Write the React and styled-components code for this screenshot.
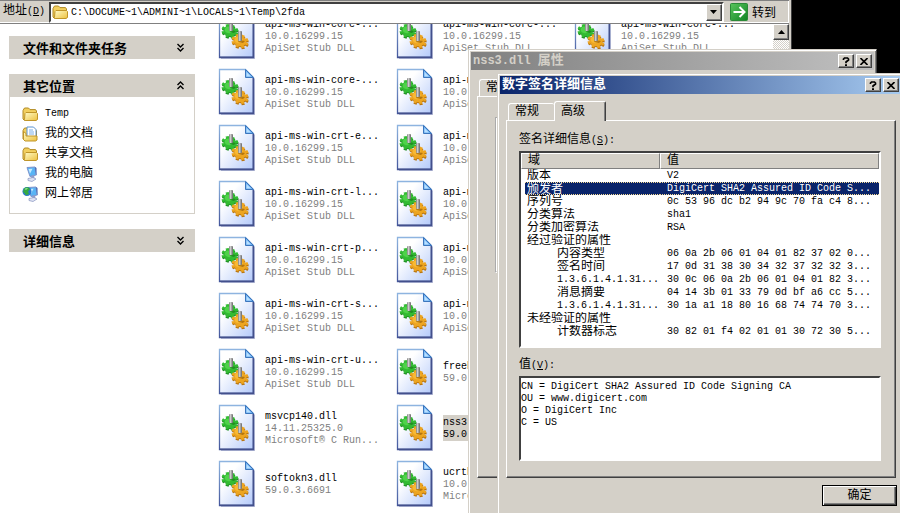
import React, { useId } from "react";
import styled, { createGlobalStyle, css } from "styled-components";

const face = "#d4d0c8";
const shade = "#808080";
const dark = "#404040";

const GlobalStyle = createGlobalStyle`
  * { box-sizing: border-box; }
  html, body { margin: 0; height: 100%; overflow: hidden; background: #000; }
  body, button, input, textarea, table {
    font-family: "Liberation Mono", "Noto Sans CJK SC", monospace;
    font-size: 10px;
    line-height: 12px;
    color: #000;
  }
`;

const raised = css`
  background: ${face};
  border: 1px solid;
  border-color: #fff ${dark} ${dark} #fff;
  box-shadow: inset -1px -1px 0 ${shade};
`;

const sunken = css`
  background: #fff;
  border: 2px solid;
  border-color: ${dark} #fff #fff ${dark};
`;

/* Han characters are drawn two half-width cells wide */
const Han = styled.span`
  font-family: "Noto Sans CJK SC", sans-serif;
  font-size: ${(p) => (p.$bold ? 13 : 12)}px;
  line-height: 10px;
`;

const Mixed = ({ children, bold }) =>
  children
    .split(/([\u4e00-\u9fff]+)/)
    .filter(Boolean)
    .map((run, i) =>
      /[\u4e00-\u9fff]/.test(run) ? (
        <Han key={i} $bold={bold}>{run}</Han>
      ) : (
        <React.Fragment key={i}>{run}</React.Fragment>
      )
    );

const Desktop = styled.main`
  position: relative;
  height: 100vh;
  overflow: hidden;
  background: #000;
`;

/* ---------- Explorer ---------- */
const Explorer = styled.section`
  position: absolute;
  inset: 0 108px 0 0;
  display: flex;
  flex-direction: column;
  background: ${face};
  border-right: 1px solid ${dark};
  padding-right: 2px;
`;

const AddressBar = styled.form`
  display: flex;
  align-items: center;
  height: 24px;
  padding: 0 2px 0 3px;
  border-top: 1px solid ${shade};
  border-bottom: 1px solid ${shade};
  box-shadow: inset -1px -1px 0 #fff;
`;

const AddressLabel = styled.label`
  width: 46px;
  line-height: 16px;
  white-space: nowrap;
`;

const AddressCombo = styled.div`
  ${sunken}
  flex: 1;
  display: flex;
  align-items: center;
  height: 21px;
  svg { margin: 0 2px 0 1px; flex: none; }
`;

const AddressInput = styled.input`
  flex: 1;
  min-width: 0;
  border: 0;
  padding: 2px 1px 0;
  outline: 0;
  background: transparent;
`;

const SmallButton = styled.button`
  ${raised}
  display: flex;
  align-items: center;
  justify-content: center;
  flex: none;
  width: 16px;
  height: ${(p) => p.$height || 14}px;
  padding: 0;
`;

const GoButton = styled.button`
  display: flex;
  align-items: center;
  gap: 4px;
  width: 57px;
  margin-left: 6px;
  padding: 0;
  border: 0;
  background: none;
  white-space: nowrap;
`;

const ExplorerBody = styled.div`
  flex: 1;
  min-height: 0;
  display: flex;
  overflow: hidden;
  background: #fff;
`;

const Sidebar = styled.aside`
  flex: none;
  display: flex;
  flex-direction: column;
  gap: 15px;
  width: 204px;
  padding: 12px 9px;
`;

const TaskHeader = styled.button`
  display: flex;
  align-items: center;
  justify-content: space-between;
  width: 100%;
  height: 23px;
  padding: 0 10px 0 14px;
  border: 0;
  background: ${face};
  font-weight: 700;
`;

const PlaceList = styled.ul`
  display: flex;
  flex-direction: column;
  margin: 0;
  padding: 7px 12px 9px;
  border: 1px solid ${face};
  border-top: 0;
  list-style: none;
`;

const PlaceLink = styled.a`
  display: flex;
  align-items: center;
  gap: 7px;
  height: 20px;
  color: #000;
  text-decoration: none;
`;

const FilePane = styled.div`
  flex: 1;
  min-width: 0;
  overflow: hidden;
`;

const FileGrid = styled.ul`
  display: grid;
  grid-auto-flow: column;
  grid-template-rows: repeat(9, 56px);
  grid-auto-columns: 178px;
  margin: -16px 0 0;
  padding: 0 0 0 14px;
  list-style: none;
`;

const FileTile = styled.li`
  display: flex;
  align-items: center;
  gap: 9px;
`;

const FileText = styled.div`
  padding: 2px 0 0;
  white-space: nowrap;
  color: ${(p) => (p.$selected ? "#000" : shade)};
  background: ${(p) => (p.$selected ? face : "transparent")};
`;

const FileName = styled.div`
  color: #000;
`;

const ScrollTrack = styled.div`
  flex: none;
  width: 16px;
  background: repeating-conic-gradient(${face} 0 25%, #fff 0 50%) 0 0 / 2px 2px;
`;

/* ---------- Dialog windows ---------- */
const DialogFrame = styled.section`
  position: absolute;
  display: flex;
  flex-direction: column;
  padding: 1px;
  background: ${face};
  border: 1px solid;
  border-color: ${face} ${dark} ${dark} ${face};
  box-shadow: inset 1px 1px 0 #fff, inset -1px -1px 0 ${shade};
`;

const PropertiesWindow = styled(DialogFrame)`
  inset: 49px 23px -10px 468px;
`;

const SignatureWindow = styled(DialogFrame)`
  top: 73px;
  left: 497px;
  right: -4px;
`;

const TitleBar = styled.header`
  display: flex;
  align-items: center;
  gap: 2px;
  height: 18px;
  margin: 1px;
  padding: 0 2px;
  color: ${(p) => (p.$active ? "#fff" : face)};
  background: ${(p) =>
    p.$active
      ? "linear-gradient(90deg, #0a246a, #a6caf0)"
      : "linear-gradient(90deg, #808080, #c0c0c0)"};
`;

const Title = styled.h2`
  flex: 1;
  margin: 0;
  font-size: 12px;
  font-weight: 700;
  line-height: 16px;
`;

const TabArea = styled.div`
  display: flex;
  flex-direction: column;
  margin: 6px 6px 0 7px;
`;

const TabList = styled.div`
  display: flex;
  align-items: flex-end;
  height: 19px;
  padding-left: 2px;
`;

const Tab = styled.button`
  height: ${(p) => (p.$selected ? 20 : 17)}px;
  width: ${(p) => (p.$selected ? 52 : 46)}px;
  margin-bottom: ${(p) => (p.$selected ? -1 : 0)}px;
  padding: 0 0 0 6px;
  z-index: ${(p) => (p.$selected ? 1 : 0)};
  text-align: left;
  background: ${face};
  border: 1px solid #fff;
  border-bottom: 0;
  border-right: ${(p) => (p.$selected ? `1px solid ${dark}` : "0")};
  box-shadow: ${(p) => (p.$selected ? `inset -1px 0 0 ${shade}` : "none")};
  border-radius: 3px 2px 0 0;
`;

const TabPanel = styled.div`
  display: flex;
  flex-direction: column;
  padding: 12px 14px 16px 12px;
  border: 1px solid;
  border-color: #fff ${dark} ${dark} #fff;
  box-shadow: inset -1px -1px 0 ${shade};
`;

const PropertiesPanel = styled(TabPanel)`
  height: 382px;
  padding: 20px 17px;
`;

const GroupBox = styled.fieldset`
  height: 156px;
  margin: 0;
  padding: 0;
  border: 2px groove #fff;
`;

const FieldLabel = styled.label`
  display: block;
  height: 14px;
  line-height: 14px;
  margin-bottom: 4px;
`;

const ListView = styled.div`
  ${sunken}
  min-height: 197px;
  margin-bottom: 10px;
`;

const DetailTable = styled.table`
  width: 100%;
  table-layout: fixed;
  border-collapse: separate;
  border-spacing: 0;
`;

const HeadCell = styled.th`
  width: ${(p) => p.$width || "auto"};
  height: 16px;
  padding: 0 6px;
  background: ${face};
  border: 1px solid;
  border-color: #fff ${shade} ${shade} #fff;
  text-align: left;
  font-weight: 400;
  line-height: 12px;
`;

const Row = styled.tr`
  color: ${(p) => (p.$selected ? "#fff" : "#000")};
`;

const Cell = styled.td`
  height: 13px;
  padding: 0 0 0 ${(p) => (p.$first ? 4 : 0)}px;
`;

const CellText = styled.div`
  height: 13px;
  padding-left: ${(p) => (p.$value ? 7 : p.$indent ? 32 : 2)}px;
  overflow: hidden;
  white-space: nowrap;
  line-height: 13px;
  ${(p) =>
    p.$selected &&
    css`
      line-height: 11px;
      background: #0a246a;
      border: 0 dotted #f5db95;
      border-width: 1px 0;
    `}
`;

const ValueBox = styled.textarea`
  ${sunken}
  display: block;
  width: 100%;
  height: 85px;
  padding: 3px 0;
  resize: none;
  outline: 0;
`;

const ButtonRow = styled.footer`
  display: flex;
  justify-content: flex-end;
  padding: 7px 5px 8px;
`;

const OkButton = styled.button`
  width: 75px;
  height: 21px;
  padding: 0;
  background: ${face};
  border: 1px solid #000;
  box-shadow: inset 1px 1px 0 #fff, inset -1px -1px 0 ${dark}, inset -2px -2px 0 ${shade};
`;

/* ---------- Icons ---------- */
const FolderIcon = ({ doc }) => {
  const id = useId();
  return (
    <svg width="16" height="16" viewBox="0 0 16 16" aria-hidden="true">
      <defs>
        <linearGradient id={id} x1="0" y1="0" x2="1" y2="1">
          <stop offset="0" stopColor="#fffbc8" />
          <stop offset="1" stopColor="#edc13f" />
        </linearGradient>
      </defs>
      <path d="M1 4.5 2.5 2h4L8 3.6h5.500l1 1.400v8.500l-1.500 1H2.500L1 13z" fill="#f2cf5e" stroke="#b08a24" />
      {doc && (
        <g>
          <path d="M5 1h6.500L14 3.500V12H5z" fill="#fff" stroke="#5b93d2" />
          <path d="M7 4h4M7 6h5M7 8h5" stroke="#7aaee6" />
        </g>
      )}
      <path
        d={doc ? "M1.500 5.500 4 7.500V10h11v4l-1.500 1H3l-1.500-1.500z" : "M3 7.500 4 6.500h10.500l1 1v6l-1.500 1H3.500L2.500 13.500z"}
        fill={`url(#${id})`}
        stroke="#c09528"
      />
    </svg>
  );
};

const Monitor = () => (
  <g>
    <path d="m5 1.500 8-.5 1 8-6 1.500z" fill="#58b4f5" stroke="#7d93cc" />
    <path d="m6.500 3 4-.3-2.500 5z" fill="#c5ebff" />
    <path d="m13 1 1.500 1v7.500L14 9z" fill="#3e5fae" />
    <path d="m9 10 3-1 .5 3-3 .5z" fill="#8f9fcd" />
    <path d="m6 12.500 5-1 3 1.500-4 2.500-4-1z" fill="#dfe4f5" stroke="#8592bd" strokeWidth=".7" />
  </g>
);

const ComputerIcon = () => (
  <svg width="16" height="16" viewBox="0 0 16 16" aria-hidden="true">
    <Monitor />
  </svg>
);

const NetworkIcon = () => (
  <svg width="16" height="16" viewBox="0 0 16 16" aria-hidden="true">
    <g transform="translate(1 0)"><Monitor /></g>
    <circle cx="5" cy="5.500" r="4.500" fill="#2d77cf" />
    <path d="M2 2.500C4 .5 7 1 8 3L6 5.500 7 8 4 9.500 2.500 7 1 6z" fill="#35aa42" />
    <path d="M2.500 3c1-1.200 2.500-1.300 3.500-.8L4 4z" fill="#8de08c" />
  </svg>
);

const GoIcon = () => {
  const id = useId();
  return (
    <svg width="18" height="18" viewBox="0 0 18 18" aria-hidden="true">
      <defs>
        <linearGradient id={id} x1="0" y1="0" x2="1" y2="1">
          <stop offset="0" stopColor="#58c45c" />
          <stop offset="1" stopColor="#118524" />
        </linearGradient>
      </defs>
      <rect x=".5" y=".5" width="17" height="17" rx="1" fill={`url(#${id})`} stroke="#2b8a38" />
      <path d="M3.500 9h11M9.500 4l5 5-5 5" fill="none" stroke="#fff" strokeWidth="2" />
    </svg>
  );
};

const Gear = ({ x, y, light, main, edge }) => (
  <g transform={`translate(${x} ${y}) rotate(14) scale(1 .78)`}>
    <circle cx=".6" cy="1.500" r="6.900" fill="none" stroke={edge} strokeWidth="3.600" strokeDasharray="2.900 2.520" />
    <circle cx=".6" cy="1.500" r="6.200" fill={edge} />
    <circle r="6.900" fill="none" stroke={main} strokeWidth="3.600" strokeDasharray="2.900 2.520" />
    <circle r="6.600" fill={main} />
    <circle cx="-1.500" cy="-1" r="4" fill={light} />
  </g>
);

const DllIcon = () => {
  const id = useId();
  return (
    <svg width="38" height="48" viewBox="0 0 38 48" aria-hidden="true">
      <defs>
        <linearGradient id={id} x1="0" y1="0" x2="1" y2="1">
          <stop offset=".3" stopColor="#fff" />
          <stop offset="1" stopColor="#b3c9fa" />
        </linearGradient>
        <linearGradient id={`${id}e`} x1="0" y1="0" x2="0" y2="1">
          <stop offset="0" stopColor="#8eb4e0" />
          <stop offset="1" stopColor="#43569c" />
        </linearGradient>
        <linearGradient id={`${id}p`}>
          <stop offset="0" stopColor="#777" />
          <stop offset=".35" stopColor="#d0d0d0" />
          <stop offset="1" stopColor="#666" />
        </linearGradient>
      </defs>
      <path d="M3 3h26l8 8v36H3z" fill="#8b91ba" opacity=".6" />
      <path d="M1.500 1.500h26l8 8v36h-34z" fill={`url(#${id})`} stroke={`url(#${id}e)`} strokeWidth="1.300" />
      <path d="M35.300 10v35.300H2" fill="none" stroke="#43508c" strokeWidth="1.500" />
      <path d="M27.500 1.500v8h8z" fill="#69aef0" stroke="#3c76bd" />
      <path d="M28.500 4v4.500H33z" fill="#b9e0ff" />
      <Gear x={12} y={19} light="#4fd24a" main="#33bb33" edge="#1f8f24" />
      <Gear x={22} y={29} light="#f8b934" main="#eda521" edge="#b87510" />
      <path d="M13 18l5 1-2 2-4-1z" fill="#157018" opacity=".6" />
      <path d="M21 28l6 1-2 2-5-1z" fill="#8a5305" opacity=".6" />
      <rect x="11" y="10" width="4" height="9" rx="1" fill={`url(#${id}p)`} />
      <rect x="20" y="19" width="4" height="10" rx="1" fill={`url(#${id}p)`} />
    </svg>
  );
};

const Chevrons = ({ up }) => (
  <svg width="9" height="9" viewBox="0 0 9 9" aria-hidden="true">
    <path
      d={up ? "M1.500 4 4.500 1l3 3M1.500 8l3-3 3 3" : "M1.500 1l3 3 3-3M1.500 5l3 3 3-3"}
      fill="none"
      stroke="#000"
      strokeWidth="1.400"
    />
  </svg>
);

const Triangle = ({ up }) => (
  <svg width="7" height="4" viewBox="0 0 7 4" aria-hidden="true">
    <path d={up ? "M0 4 3.500 0 7 4z" : "M0 0h7L3.500 4z"} />
  </svg>
);

const HelpGlyph = () => (
  <svg width="8" height="9" viewBox="0 0 8 9" aria-hidden="true">
    <path d="M1.500 3V2l1-1h3l1 1v1L4 5v1.200" fill="none" stroke="#000" strokeWidth="1.700" />
    <path d="M3 7.300h2V9H3z" />
  </svg>
);

const CloseGlyph = () => (
  <svg width="8" height="7" viewBox="0 0 8 7" aria-hidden="true">
    <path d="M.5 0l7 7M7.500 0l-7 7" stroke="#000" strokeWidth="1.600" />
  </svg>
);

/* ---------- Data ---------- */
const stub = (name) => ({ name, lines: ["10.0.16299.15", "ApiSet Stub DLL"] });

const files = [
  stub("api-ms-win-core-..."),
  stub("api-ms-win-core-..."),
  stub("api-ms-win-crt-e..."),
  stub("api-ms-win-crt-l..."),
  stub("api-ms-win-crt-p..."),
  stub("api-ms-win-crt-s..."),
  stub("api-ms-win-crt-u..."),
  { name: "msvcp140.dll", lines: ["14.11.25325.0", "Microsoft® C Run..."] },
  { name: "softokn3.dll", lines: ["59.0.3.6691"] },
  stub("api-ms-win-core-..."),
  stub("api-ms-win-core-..."),
  stub("api-ms-win-crt-..."),
  stub("api-ms-win-crt-..."),
  stub("api-ms-win-crt-..."),
  stub("api-ms-win-crt-..."),
  { name: "freebl3.dll", lines: ["59.0.3.6691"] },
  { name: "nss3.dll", lines: ["59.0.3.6691"], selected: true },
  { name: "ucrtbase.dll", lines: ["10.0.16299.15", "Microsoft® C Run..."] },
  stub("api-ms-win-core-..."),
];

const places = [
  ["Temp", <FolderIcon />],
  ["我的文档", <FolderIcon doc />],
  ["共享文档", <FolderIcon />],
  ["我的电脑", <ComputerIcon />],
  ["网上邻居", <NetworkIcon />],
];

const details = [
  { field: "版本", value: "V2" },
  { field: "颁发者", value: "DigiCert SHA2 Assured ID Code S...", selected: true },
  { field: "序列号", value: "0c 53 96 dc b2 94 9c 70 fa c4 8..." },
  { field: "分类算法", value: "sha1" },
  { field: "分类加密算法", value: "RSA" },
  { field: "经过验证的属性", value: "" },
  { field: "内容类型", value: "06 0a 2b 06 01 04 01 82 37 02 0...", indent: true },
  { field: "签名时间", value: "17 0d 31 38 30 34 32 37 32 32 3...", indent: true },
  { field: "1.3.6.1.4.1.31...", value: "30 0c 06 0a 2b 06 01 04 01 82 3...", indent: true },
  { field: "消息摘要", value: "04 14 3b 01 33 79 0d bf a6 cc 5...", indent: true },
  { field: "1.3.6.1.4.1.31...", value: "30 1a a1 18 80 16 68 74 74 70 3...", indent: true },
  { field: "未经验证的属性", value: "" },
  { field: "计数器标志", value: "30 82 01 f4 02 01 01 30 72 30 5...", indent: true },
];

const issuer = `CN = DigiCert SHA2 Assured ID Code Signing CA
OU = www.digicert.com
O = DigiCert Inc
C = US`;

const WindowTitle = ({ active, children }) => (
  <TitleBar $active={active}>
    <Title><Mixed bold>{children}</Mixed></Title>
    <SmallButton type="button" aria-label="帮助"><HelpGlyph /></SmallButton>
    <SmallButton type="button" aria-label="关闭"><CloseGlyph /></SmallButton>
  </TitleBar>
);

const TaskTitle = ({ open, children }) => (
  <TaskHeader type="button" aria-expanded={!!open}>
    <Mixed bold>{children}</Mixed>
    <Chevrons up={open} />
  </TaskHeader>
);

export default function App() {
  return (
    <Desktop>
      <GlobalStyle />
      <Explorer>
        <AddressBar onSubmit={(e) => e.preventDefault()}>
          <AddressLabel htmlFor="address"><Mixed>地址</Mixed>(<u>D</u>)</AddressLabel>
          <AddressCombo>
            <FolderIcon />
            <AddressInput id="address" defaultValue="C:\DOCUME~1\ADMINI~1\LOCALS~1\Temp\2fda" />
            <SmallButton type="button" $height={17} aria-label="展开"><Triangle /></SmallButton>
          </AddressCombo>
          <GoButton type="submit"><GoIcon /><Han>转到</Han></GoButton>
        </AddressBar>
        <ExplorerBody>
          <Sidebar>
            <TaskTitle>文件和文件夹任务</TaskTitle>
            <div>
              <TaskTitle open>其它位置</TaskTitle>
              <PlaceList>
                {places.map(([name, icon]) => (
                  <li key={name}>
                    <PlaceLink href="#">{icon}<span><Mixed>{name}</Mixed></span></PlaceLink>
                  </li>
                ))}
              </PlaceList>
            </div>
            <TaskTitle>详细信息</TaskTitle>
          </Sidebar>
          <FilePane>
            <FileGrid>
              {files.map((file, i) => (
                <FileTile key={i}>
                  <DllIcon />
                  <FileText $selected={file.selected}>
                    <FileName>{file.name}</FileName>
                    {file.lines.map((line) => <div key={line}>{line}</div>)}
                  </FileText>
                </FileTile>
              ))}
            </FileGrid>
          </FilePane>
          <ScrollTrack>
            <SmallButton type="button" $height={16} aria-label="向上滚动"><Triangle up /></SmallButton>
          </ScrollTrack>
        </ExplorerBody>
      </Explorer>

      <PropertiesWindow>
        <WindowTitle>nss3.dll 属性</WindowTitle>
        <TabArea>
          <TabList role="tablist">
            <Tab type="button" role="tab"><Han>常规</Han></Tab>
          </TabList>
          <PropertiesPanel><GroupBox /></PropertiesPanel>
        </TabArea>
      </PropertiesWindow>

      <SignatureWindow role="dialog">
        <WindowTitle active>数字签名详细信息</WindowTitle>
        <TabArea>
          <TabList role="tablist">
            <Tab type="button" role="tab" aria-selected="false"><Han>常规</Han></Tab>
            <Tab type="button" role="tab" aria-selected="true" $selected><Han>高级</Han></Tab>
          </TabList>
          <TabPanel role="tabpanel">
            <FieldLabel as="div" id="details-label"><Mixed>签名详细信息</Mixed>(<u>S</u>):</FieldLabel>
            <ListView>
              <DetailTable aria-labelledby="details-label">
                <thead>
                  <tr>
                    <HeadCell $width="139px"><Han>域</Han></HeadCell>
                    <HeadCell><Han>值</Han></HeadCell>
                  </tr>
                </thead>
                <tbody>
                  {details.map((d, i) => (
                    <Row key={i} $selected={d.selected}>
                      <Cell $first>
                        <CellText $indent={d.indent} $selected={d.selected}><Mixed>{d.field}</Mixed></CellText>
                      </Cell>
                      <Cell>
                        <CellText $value $selected={d.selected}>{d.value}</CellText>
                      </Cell>
                    </Row>
                  ))}
                </tbody>
              </DetailTable>
            </ListView>
            <FieldLabel htmlFor="value"><Mixed>值</Mixed>(<u>V</u>):</FieldLabel>
            <ValueBox id="value" readOnly defaultValue={issuer} />
          </TabPanel>
        </TabArea>
        <ButtonRow>
          <OkButton type="button"><Han>确定</Han></OkButton>
        </ButtonRow>
      </SignatureWindow>
    </Desktop>
  );
}
